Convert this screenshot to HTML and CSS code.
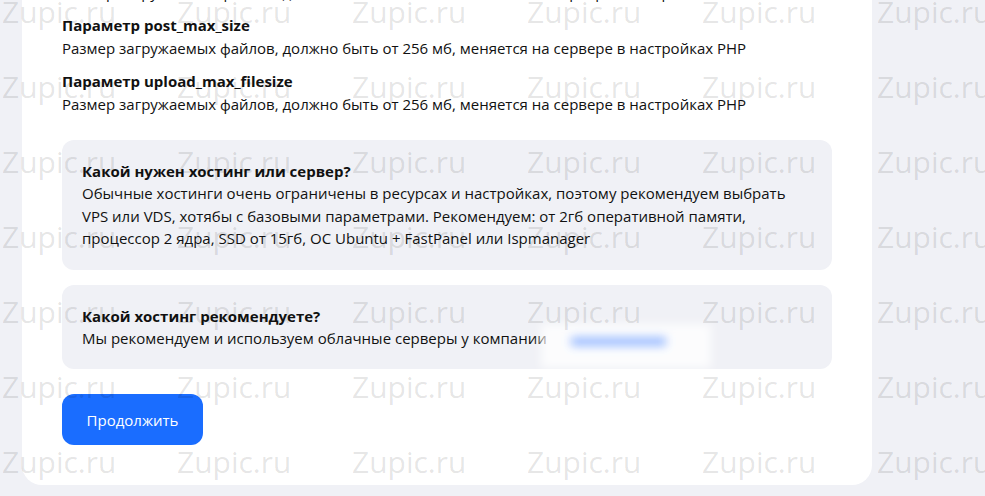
FILE: index.html
```html
<!DOCTYPE html>
<html lang="ru">
<head>
    <meta charset="UTF-8">
    <title>Требования к серверу</title>
    <link rel="stylesheet" href="styles.css">
</head>
<body>
<div class="page">
    <div class="card">
        <div class="param">
            <p class="param-text">Размер загружаемых файлов, должно быть от 256 мб, меняется на сервере в настройках PHP</p>
        </div>
        <div class="param">
            <p class="param-title">Параметр post_max_size</p>
            <p class="param-text">Размер загружаемых файлов, должно быть от 256 мб, меняется на сервере в настройках PHP</p>
        </div>
        <div class="param">
            <p class="param-title">Параметр upload_max_filesize</p>
            <p class="param-text">Размер загружаемых файлов, должно быть от 256 мб, меняется на сервере в настройках PHP</p>
        </div>

        <div class="faq">
            <p class="faq-title">Какой нужен хостинг или сервер?</p>
            <p class="faq-text">Обычные хостинги очень ограничены в ресурсах и настройках, поэтому рекомендуем выбрать VPS или VDS, хотябы с базовыми параметрами. Рекомендуем: от 2гб оперативной памяти, процессор 2 ядра, SSD от 15гб, ОС Ubuntu + FastPanel или Ispmanager</p>
        </div>
        <div class="faq">
            <p class="faq-title">Какой хостинг рекомендуете?</p>
            <p class="faq-text">Мы рекомендуем и используем облачные серверы у компании<span class="hidden-link"><span class="hidden-link-bar"></span></span></p>
        </div>

        <button class="btn" type="button">Продолжить</button>
    </div>
</div>

<!-- водяной знак поверх страницы -->
<div class="watermark" id="watermark"></div>
<script>
    let wm = document.getElementById('watermark');
    for (let i = 0; i < 42; i++) {
        let s = document.createElement('span');
        s.textContent = 'Zupic.ru';
        wm.appendChild(s);
    }
</script>
</body>
</html>
```

FILE: styles.css
```css
* {
    margin: 0;
    padding: 0;
    box-sizing: border-box;
}

html, body {
    height: 100%;
    overflow: hidden;
}

body {
    background-color: #f0f1f6;
    font-family: "Open Sans", "Liberation Sans", sans-serif;
    font-size: 15px;
    line-height: 22.4px;
    color: #111;
}

.page {
    padding: 0 22px;
}

.card {
    width: 850px;
    background-color: #fff;
    margin-top: -40px;
    padding: 21px 40px 40px;
    border-radius: 0 0 20px 20px;
}

.param + .param {
    margin-top: 11px;
}

.param-title,
.faq-title {
    font-weight: 700;
}

.faq {
    background-color: #f0f1f6;
    border-radius: 12px;
    padding: 20px;
    margin-top: 25px;
}

.faq + .faq {
    margin-top: 15px;
}

/* замазанная ссылка */
.hidden-link {
    display: inline-block;
    vertical-align: middle;
    width: 170px;
    height: 44px;
    margin: -12px 0 -24px -6px;
    padding: 13px 0 0 30px;
    background-color: rgba(255, 255, 255, 0.8);
    filter: blur(5px);
}

.hidden-link-bar {
    display: block;
    width: 95px;
    height: 9px;
    background-color: #9bbcff;
}

.btn {
    display: block;
    margin-top: 25px;
    width: 141px;
    height: 51px;
    border: none;
    border-radius: 12px;
    background-color: #1a6dff;
    color: #fff;
    font-family: "Open Sans", "Liberation Sans", sans-serif;
    font-size: 15px;
    cursor: pointer;
}

.watermark {
    position: absolute;
    top: 0;
    left: 0;
    right: 0;
    bottom: 0;
    overflow: hidden;
    padding: 0 0 0 2px;
    margin-top: -3px;
    display: grid;
    grid-template-columns: repeat(6, 175px);
    grid-auto-rows: 75px;
    pointer-events: none;
}

.watermark span {
    font-family: "Open Sans", "Liberation Sans", sans-serif;
    font-size: 30px;
    line-height: 1;
    color: rgba(0, 0, 0, 0.11);
    white-space: nowrap;
}
```
